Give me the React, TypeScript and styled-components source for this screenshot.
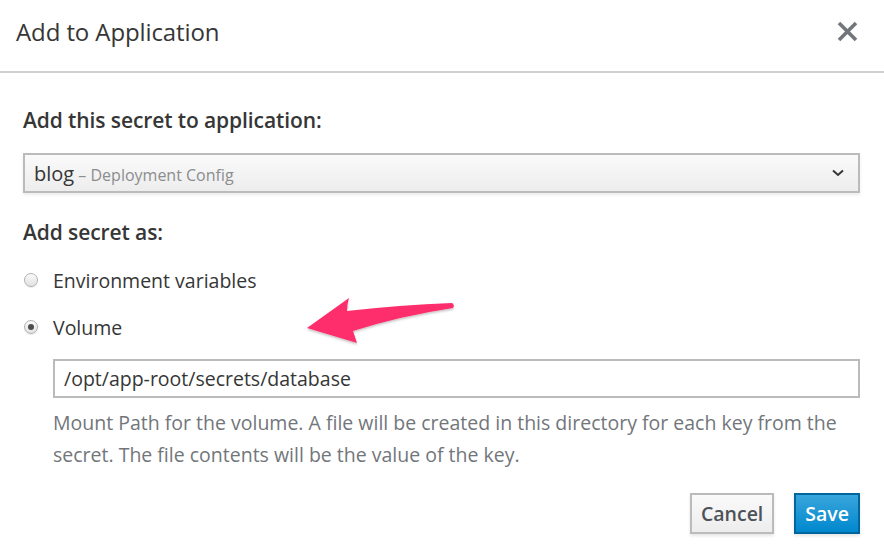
import React from "react";
import styled, { createGlobalStyle } from "styled-components";

const Global = createGlobalStyle`
  html, body { margin: 0; padding: 0; background: #fff; }
  body { font-family: "Open Sans", "Liberation Sans", sans-serif; color: #363636; }
  * { box-sizing: border-box; }
`;

const Modal = styled.div`
  position: relative;
  width: 884px;
  height: 559px;
  background: #fff;
  overflow: hidden;
`;

const Header = styled.div`
  height: 73px;
  display: flex;
  align-items: center;
  justify-content: space-between;
  padding: 0 26px 8px 16px;
  border-bottom: 2px solid #d1d1d1;
`;

const Title = styled.h4`
  margin: 0;
  font-size: 24px;
  font-weight: 400;
  color: #363636;
  letter-spacing: -0.1px;
`;

const Close = styled.button`
  border: 0;
  background: none;
  padding: 0;
  width: 21px;
  height: 22px;
  display: flex;
  align-items: center;
  justify-content: center;
`;

const Body = styled.div`
  padding: 34px 24px 0 23px;
  display: flex;
  flex-direction: column;
`;

const Label = styled.div`
  font-size: 21px;
  font-weight: 600;
  color: #363636;
  line-height: 26px;
  letter-spacing: -0.1px;
`;

const Select = styled.div`
  margin-top: 20px;
  height: 40px;
  border: 2px solid #bbbbbb;
  background: linear-gradient(#fafafa, #ededed);
  box-shadow: 0 2px 3px rgba(0, 0, 0, 0.08);
  display: flex;
  align-items: center;
  justify-content: space-between;
  padding: 0 14px 0 9px;
`;

const SelectText = styled.span`
  font-size: 20px;
  color: #363636;
`;

const SelectSub = styled.span`
  font-size: 16px;
  color: #8b8d8f;
`;

const SectionLabel = styled(Label)`
  margin-top: 26px;
`;

const RadioRow = styled.div<{ $first?: boolean }>`
  display: flex;
  align-items: center;
  gap: 15px;
  margin-top: ${(p) => (p.$first ? "22px" : "21px")};
  padding-left: 1px;
  height: 26px;
`;

const RadioDot = styled.span<{ $checked?: boolean }>`
  width: 14px;
  height: 14px;
  border-radius: 50%;
  border: 1px solid #b3b3b3;
  background: linear-gradient(#fafafa, #e2e2e2);
  box-shadow: 0 1px 1px rgba(0, 0, 0, 0.08);
  display: flex;
  align-items: center;
  justify-content: center;
  &::after {
    content: "";
    width: 6px;
    height: 6px;
    border-radius: 50%;
    background: ${(p) => (p.$checked ? "#4d4d4d" : "transparent")};
  }
`;

const RadioText = styled.span`
  font-size: 19.5px;
  color: #363636;
`;

const Indented = styled.div`
  padding-left: 30px;
  margin-top: 19px;
  display: flex;
  flex-direction: column;
`;

const Input = styled.div`
  height: 39px;
  border: 2px solid #bbbbbb;
  background: #fff;
  display: flex;
  align-items: center;
  padding: 0 9px;
  font-size: 19.5px;
  color: #363636;
`;

const Help = styled.p`
  margin: 9px 0 0;
  font-size: 19.5px;
  line-height: 32px;
  color: #72767b;
`;

const Footer = styled.div`
  display: flex;
  justify-content: flex-end;
  gap: 20px;
  padding: 0 24px 0 0;
  margin-top: 22px;
`;

const Button = styled.button<{ $primary?: boolean }>`
  height: 41px;
  padding: 0 9px;
  font-family: "Open Sans", "Liberation Sans", sans-serif;
  font-size: 19.5px;
  font-weight: 600;
  border: 2px solid ${(p) => (p.$primary ? "#00659c" : "#bbbbbb")};
  color: ${(p) => (p.$primary ? "#fff" : "#4d5258")};
  background: ${(p) =>
    p.$primary ? "linear-gradient(#39a5dc, #0088ce)" : "linear-gradient(#fafafa, #ededed)"};
  box-shadow: 0 2px 3px rgba(0, 0, 0, 0.1);
`;

const Arrow = styled.svg`
  position: absolute;
  left: 0;
  top: 0;
  pointer-events: none;
`;

export default function App() {
  return (
    <>
      <Global />
      <Modal>
        <Header>
          <Title>Add to Application</Title>
          <Close aria-label="Close">
            <svg width="21" height="21" viewBox="0 0 21 21">
              <path d="M2 2 L19 19 M19 2 L2 19" stroke="#72767b" strokeWidth="3.6" strokeLinecap="butt" />
            </svg>
          </Close>
        </Header>
        <Body>
          <Label>Add this secret to application:</Label>
          <Select>
            <span>
              <SelectText>blog</SelectText> <SelectSub>– Deployment Config</SelectSub>
            </span>
            <svg width="12" height="8" viewBox="0 0 12 8">
              <path d="M1 1.5 L6 6 L11 1.5" stroke="#363636" strokeWidth="2" fill="none" />
            </svg>
          </Select>
          <SectionLabel>Add secret as:</SectionLabel>
          <RadioRow $first>
            <RadioDot />
            <RadioText>Environment variables</RadioText>
          </RadioRow>
          <RadioRow>
            <RadioDot $checked />
            <RadioText>Volume</RadioText>
          </RadioRow>
          <Indented>
            <Input>/opt/app-root/secrets/database</Input>
            <Help>
              Mount Path for the volume. A file will be created in this directory for each key from the
              secret. The file contents will be the value of the key.
            </Help>
          </Indented>
        </Body>
        <Footer>
          <Button>Cancel</Button>
          <Button $primary>Save</Button>
        </Footer>
        <Arrow width="884" height="559" viewBox="0 0 884 559">
          <defs>
            <filter id="sh" x="-10%" y="-10%" width="120%" height="130%">
              <feDropShadow dx="0" dy="1.5" stdDeviation="1.2" floodColor="#000" floodOpacity="0.25" />
            </filter>
          </defs>
          <path
            d="M307 328 L349 298 Q347 304 347 311 Q400 305 452 303 Q455 305 453 308 Q400 316 353 331 Q355 337 357 343 Z"
            fill="#fe2d6c"
            filter="url(#sh)"
          />
        </Arrow>
      </Modal>
    </>
  );
}
